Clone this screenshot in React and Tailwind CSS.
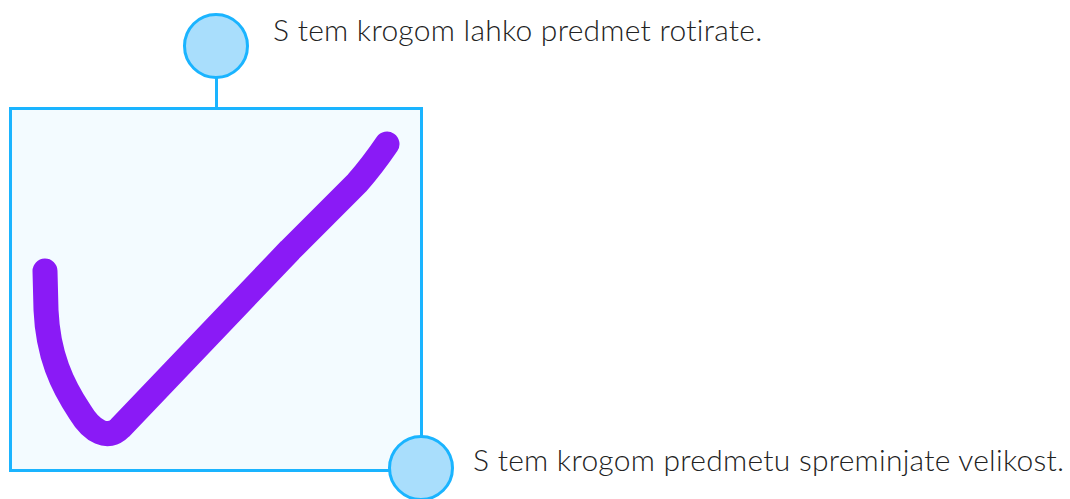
import React from 'react';

const Handle = ({ className }) => (
  <div className={`absolute w-[66px] h-[66px] rounded-full border-[3px] border-[#1ab4ff] bg-[#a9defc] ${className}`} />
);

const App = () => {
  return (
    <div className="relative w-[1070px] h-[499px] bg-white overflow-hidden font-['Lato',sans-serif] font-light text-[30px] tracking-[0.25px] text-[#222]">
      <div className="absolute left-[215px] top-[78px] w-[3px] h-[30px] bg-[#1ab4ff]" />
      <div className="absolute left-[9px] top-[107px] w-[414px] h-[365px] border-[3px] border-[#1ab4ff] bg-[#f3fbff]" />

      <svg className="absolute left-0 top-0" width="1070" height="499" viewBox="0 0 1070 499">
        <path
          d="M45 271 L46 310 C48 355 62 385 80 412 C92 432 108 440 120 428 L290 250 L357 183 Q372 166 387 144"
          fill="none"
          stroke="#8a1af6"
          strokeWidth="25"
          strokeLinecap="round"
          strokeLinejoin="round"
        />
      </svg>

      <Handle className="left-[183px] top-[13px]" />
      <Handle className="left-[388px] top-[435px]" />

      <p className="absolute left-[273px] top-[11px] leading-[36px] whitespace-nowrap">S tem krogom lahko predmet rotirate.</p>
      <p className="absolute left-[473px] top-[441px] leading-[36px] whitespace-nowrap">S tem krogom predmetu spreminjate velikost.</p>
    </div>
  );
};

export default App;
